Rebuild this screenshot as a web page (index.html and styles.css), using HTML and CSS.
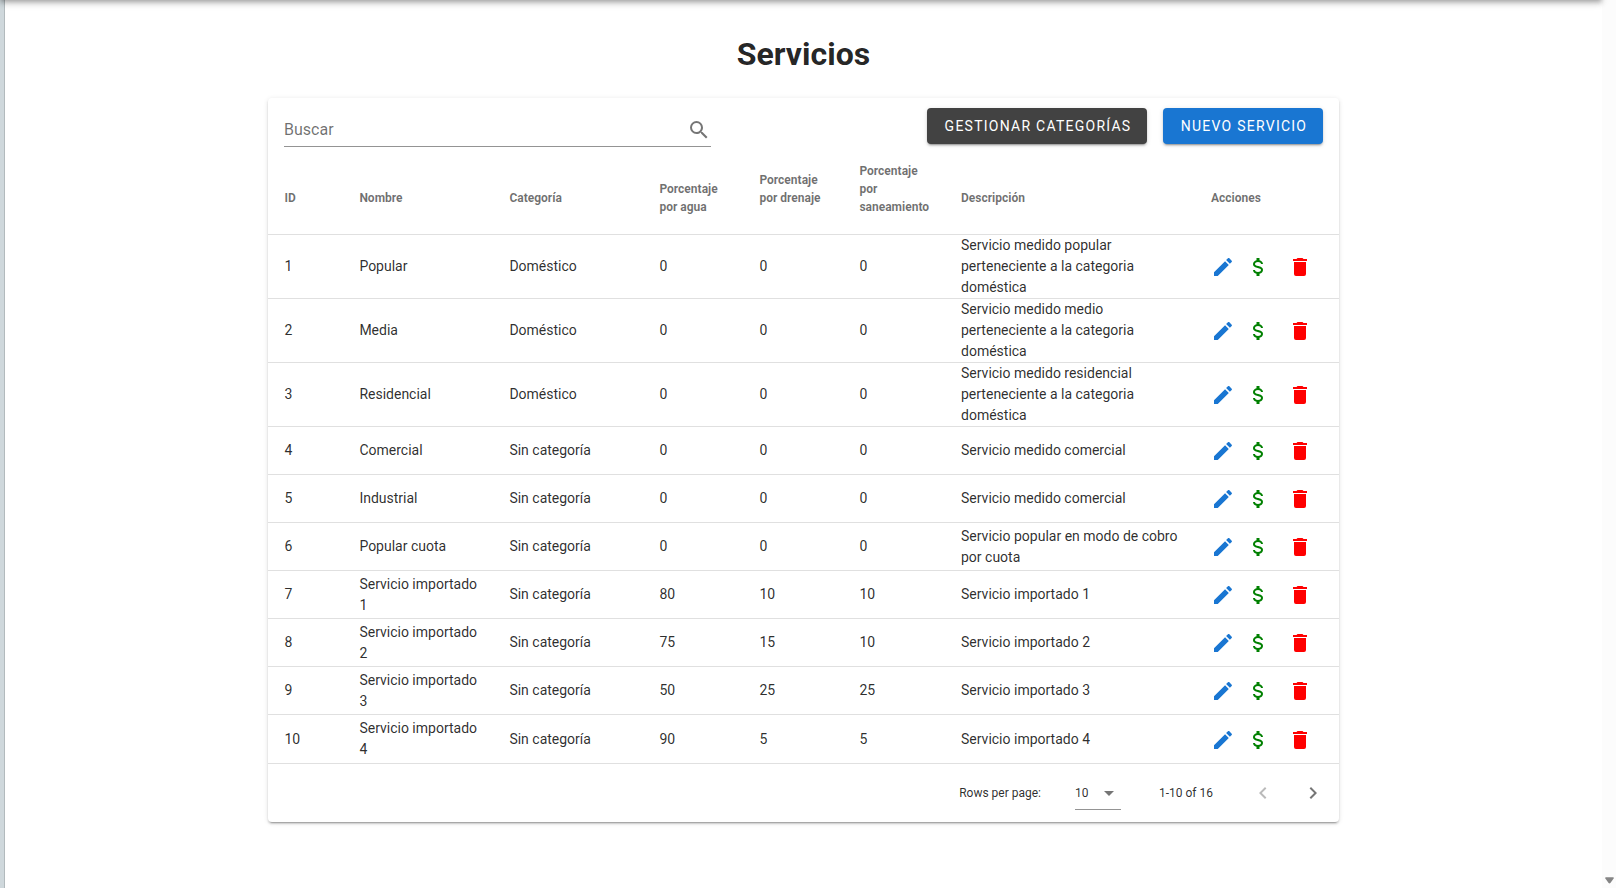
FILE: index.html
```html
<!DOCTYPE html>
<html lang="es">
<head>
<meta charset="utf-8">
<title>Servicios</title>
<link rel="stylesheet" href="styles.css">
</head>
<body>
<svg class="sprite" aria-hidden="true">
  <symbol id="pencil" viewBox="0 0 24 24"><path d="M20.71,7.04C21.1,6.65 21.1,6 20.71,5.63L18.37,3.29C18,2.9 17.35,2.9 16.96,3.29L15.12,5.12L18.87,8.87M3,17.25V21H6.75L17.81,9.93L14.06,6.18L3,17.25Z"/></symbol>
  <symbol id="usd" viewBox="0 0 24 24"><path d="M7,15H9C9,16.08 10.37,17 12,17C13.63,17 15,16.08 15,15C15,13.9 13.96,13.5 11.76,12.97C9.64,12.44 7,11.78 7,9C7,7.21 8.47,5.69 10.5,5.18V3H13.5V5.18C15.53,5.69 17,7.21 17,9H15C15,7.92 13.63,7 12,7C10.37,7 9,7.92 9,9C9,10.1 10.04,10.5 12.24,11.03C14.36,11.56 17,12.22 17,15C17,16.79 15.53,18.31 13.5,18.82V21H10.5V18.82C8.47,18.31 7,16.79 7,15Z"/></symbol>
  <symbol id="delete" viewBox="0 0 24 24"><path d="M19,4H15.5L14.5,3H9.5L8.5,4H5V6H19M6,19A2,2 0 0,0 8,21H16A2,2 0 0,0 18,19V7H6V19Z"/></symbol>
</svg>
<div class="app-bar"></div>
<div class="layout">
  <aside class="drawer"></aside>
  <main class="content">
    <h1 class="title">Servicios</h1>
    <section class="card">
      <div class="toolbar">
        <div class="search">
          <span class="search-label">Buscar</span>
          <svg class="icon grey" viewBox="0 0 24 24"><path d="M9.5,3A6.5,6.5 0 0,1 16,9.5C16,11.11 15.41,12.59 14.44,13.73L14.71,14H15.5L20.5,19L19,20.5L14,15.5V14.71L13.73,14.44C12.59,15.41 11.11,16 9.5,16A6.5,6.5 0 0,1 3,9.5A6.5,6.5 0 0,1 9.5,3M9.5,5C7,5 5,7 5,9.5C5,12 7,14 9.5,14C12,14 14,12 14,9.5C14,7 12,5 9.5,5Z"/></svg>
        </div>
        <div class="buttons">
          <button class="btn btn-dark">GESTIONAR CATEGORÍAS</button>
          <button class="btn btn-primary">NUEVO SERVICIO</button>
        </div>
      </div>
      <table class="table">
        <colgroup><col class="c-id"><col class="c-name"><col class="c-name"><col class="c-pct"><col class="c-pct"><col class="c-san"><col class="c-desc"><col></colgroup>
        <thead>
          <tr><th>ID</th><th>Nombre</th><th>Categoría</th><th>Porcentaje<br>por agua</th><th class="sort-wrap">Porcentaje<br>por drenaje</th><th class="sort-wrap">Porcentaje<br>por<br>saneamiento</th><th>Descripción</th><th>Acciones</th></tr>
        </thead>
        <tbody id="rows"></tbody>
      </table>
      <footer class="footer">
        <span class="per-page">Rows per page:</span>
        <div class="select"><span>10</span><svg class="icon grey" viewBox="0 0 24 24"><path d="M7,10L12,15L17,10H7Z"/></svg></div>
        <span class="range">1-10 of 16</span>
        <svg class="icon prev" viewBox="0 0 24 24"><path d="M15.41,16.58L10.83,12L15.41,7.41L14,6L8,12L14,18L15.41,16.58Z"/></svg>
        <svg class="icon grey" viewBox="0 0 24 24"><path d="M8.59,16.58L13.17,12L8.59,7.41L10,6L16,12L10,18L8.59,16.58Z"/></svg>
      </footer>
    </section>
  </main>
  <div class="scrollbar"><svg class="arrow" viewBox="0 0 10 7"><path d="M.8 0H9.2Q10 .2 9.6 1.4L6 6.4Q5 7.4 4 6.4L.4 1.4Q0 .2 .8 0Z"/></svg></div>
</div>
<script src="rows.js"></script>
</body>
</html>
```
FILE: styles.css
```css
* { box-sizing: border-box; }
body {
  margin: 0;
  height: 888px;
  overflow: hidden;
  position: relative;
  font-family: Roboto, "Liberation Sans", sans-serif;
  font-size: 16px;
  line-height: 1.5;
  color: rgba(0, 0, 0, .87);
  background: #fff;
}
.sprite { display: none; }
.app-bar {
  position: absolute;
  top: -64px;
  left: 0;
  width: 1602px;
  height: 64px;
  box-shadow: 0 2px 4px -1px rgba(0, 0, 0, .2), 0 4px 5px 0 rgba(0, 0, 0, .14), 0 1px 10px 0 rgba(0, 0, 0, .12);
}
.layout { display: flex; height: 888px; }
.drawer { width: 5px; background: #cfd8dc; border-right: 1px solid #b2babd; }
.content { flex: 1; padding: 30px 0 0 263px; }
.scrollbar { width: 14px; background: #fcfcfc; display: flex; align-items: flex-end; justify-content: center; padding-bottom: 4px; }
.arrow { width: 9px; height: 7px; fill: #858585; }
.title { margin: 0 0 20px; width: 1071px; text-align: center; font-size: 32px; line-height: 48px; font-weight: 700; }
.card {
  width: 1071px;
  height: 724px;
  border-radius: 4px;
  background: #fff;
  box-shadow: 0 3px 1px -2px rgba(0, 0, 0, .2), 0 2px 2px 0 rgba(0, 0, 0, .14), 0 1px 5px 0 rgba(0, 0, 0, .12);
}
.toolbar { height: 64px; padding: 10px 16px 0; display: flex; justify-content: space-between; align-items: flex-start; }
.search { width: 427px; height: 39px; padding-top: 6px; border-bottom: 1px solid #949494; display: flex; align-items: center; justify-content: space-between; color: rgba(0, 0, 0, .57); }
.icon { width: 24px; height: 24px; flex: none; display: block; fill: currentColor; }
.grey { color: rgba(0, 0, 0, .54); }
.buttons { display: flex; gap: 16px; }
.btn {
  height: 36px;
  padding: 0 0 0 2px;
  border: 0;
  border-radius: 4px;
  color: #fff;
  font: 400 14px Roboto, "Liberation Sans", sans-serif;
  letter-spacing: 1.25px;
  box-shadow: 0 3px 1px -2px rgba(0, 0, 0, .2), 0 2px 2px 0 rgba(0, 0, 0, .14), 0 1px 5px 0 rgba(0, 0, 0, .12);
}
.btn-dark { width: 220px; background: #424242; }
.btn-primary { width: 160px; background: #1976d2; }
.table { width: 1071px; table-layout: fixed; border-collapse: separate; border-spacing: 0; }
.c-id { width: 75px; }
.c-name { width: 150px; }
.c-pct { width: 100px; }
.c-san { width: 102px; }
.c-desc { width: 250px; }
th, td { padding: 0 15.6px 0 16.4px; text-align: left; vertical-align: middle; border-bottom: 1px solid rgba(0, 0, 0, .12); }
th { height: 73px; font-size: 12px; line-height: 18px; font-weight: 700; color: rgba(0, 0, 0, .57); white-space: nowrap; }
th.sort-wrap { padding-bottom: 18px; }
td { height: 48px; font-size: 14px; line-height: 21px; color: rgba(0, 0, 0, .83); }
tbody tr:last-child td { border-bottom: 0; }
th:nth-child(n+7), td:nth-child(n+7) { padding-left: 16px; }
.actions { display: flex; align-items: center; padding-top: 1px; }
.edit { color: #1976d2; margin-right: 11px; }
.rate { color: green; margin-right: 18px; }
.remove { color: red; }
.footer { height: 59px; border-top: 1px solid rgba(0, 0, 0, .12); padding: 0 14px 0 0; display: flex; align-items: center; justify-content: flex-end; font-size: 12px; color: rgba(0, 0, 0, .83); }
.select { width: 46px; height: 34px; margin: 0 38px 0 34px; display: flex; align-items: center; justify-content: space-between; border-bottom: 1px solid #949494; }
.range { margin-right: 38px; }
.prev { color: rgba(0, 0, 0, .27); margin-right: 26px; }
```
FILE: rows.js
```js
const services = [
  ["Popular", "Doméstico", 0, 0, 0, "Servicio medido popular perteneciente a la categoria doméstica"],
  ["Media", "Doméstico", 0, 0, 0, "Servicio medido medio perteneciente a la categoria doméstica"],
  ["Residencial", "Doméstico", 0, 0, 0, "Servicio medido residencial perteneciente a la categoria doméstica"],
  ["Comercial", "Sin categoría", 0, 0, 0, "Servicio medido comercial"],
  ["Industrial", "Sin categoría", 0, 0, 0, "Servicio medido comercial"],
  ["Popular cuota", "Sin categoría", 0, 0, 0, "Servicio popular en modo de cobro por cuota"],
  ["Servicio importado 1", "Sin categoría", 80, 10, 10, "Servicio importado 1"],
  ["Servicio importado 2", "Sin categoría", 75, 15, 10, "Servicio importado 2"],
  ["Servicio importado 3", "Sin categoría", 50, 25, 25, "Servicio importado 3"],
  ["Servicio importado 4", "Sin categoría", 90, 5, 5, "Servicio importado 4"]
];
const icon = (name, cls) => `<svg class="icon ${cls}"><use href="#${name}"/></svg>`;
const actions = `<td><div class="actions">${icon("pencil", "edit")}${icon("usd", "rate")}${icon("delete", "remove")}</div></td>`;
document.getElementById("rows").innerHTML = services
  .map((s, i) => `<tr>${[i + 1, ...s].map(v => `<td>${v}</td>`).join("")}${actions}</tr>`)
  .join("");
```
